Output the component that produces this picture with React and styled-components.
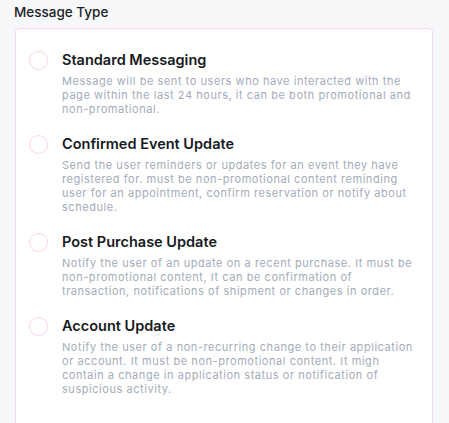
import React from "react";
import styled, { createGlobalStyle } from "styled-components";

const GlobalStyle = createGlobalStyle`
  html, body {
    margin: 0;
    padding: 0;
    background-color: #f7f8fa;
    font-family: Inter, "Noto Sans", sans-serif;
  }
`;

const Page = styled.div`
  padding: 3px 16px 0 15px;
  height: 423px;
  overflow: hidden;
  box-sizing: border-box;
`;

const Label = styled.div`
  font-size: 13.5px;
  font-weight: 500;
  color: #1c1f26;
  line-height: 18px;
  margin-bottom: 7px;
  margin-left: -1px;
`;

const Card = styled.div`
  background-color: #ffffff;
  border: solid 1px #f6d6f1;
  border-radius: 4px;
  padding: 21px 20px 60px 13px;
  display: flex;
  flex-direction: column;
  gap: 18px;
`;

const Option = styled.label`
  display: flex;
  align-items: flex-start;
  gap: 14px;
  cursor: pointer;
`;

const Radio = styled.span`
  flex: none;
  width: 17px;
  height: 17px;
  border: solid 1.5px #f7d4f1;
  border-radius: 50%;
  margin-top: 1px;
`;

const Text = styled.div`
  display: flex;
  flex-direction: column;
  gap: 4px;
`;

const Title = styled.div`
  font-size: 14.5px;
  font-weight: 600;
  color: #161a22;
  line-height: 20px;
`;

const Desc = styled.div`
  font-size: 11px;
  letter-spacing: 0.55px;
  color: #a3acba;
  line-height: 14px;
  white-space: nowrap;
`;

const options = [
  {
    title: "Standard Messaging",
    desc: [
      "Message will be sent to users who have interacted with the",
      "page within the last 24 hours, it can be both promotional and",
      "non-promational.",
    ],
  },
  {
    title: "Confirmed Event Update",
    desc: [
      "Send the user reminders or updates for an event they have",
      "registered for. must be non-promotional content reminding",
      "user for an appointment, confirm reservation or notify about",
      "schedule.",
    ],
  },
  {
    title: "Post Purchase Update",
    desc: [
      "Notify the user of an update on a recent purchase. It must be",
      "non-promotional content, It can be confirmation of",
      "transaction, notifications of shipment or changes in order.",
    ],
  },
  {
    title: "Account Update",
    desc: [
      "Notify the user of a non-recurring change to their application",
      "or account. It must be non-promotional content. It migh",
      "contain a change in application status or notification of",
      "suspicious activity.",
    ],
  },
];

const App = () => {
  return (
    <>
      <GlobalStyle />
      <Page>
        <Label>Message Type</Label>
        <Card>
          {options.map((o) => (
            <Option key={o.title}>
              <Radio />
              <Text>
                <Title>{o.title}</Title>
                <Desc>
                  {o.desc.map((line, i) => (
                    <div key={i}>{line}</div>
                  ))}
                </Desc>
              </Text>
            </Option>
          ))}
        </Card>
      </Page>
    </>
  );
};

export default App;
